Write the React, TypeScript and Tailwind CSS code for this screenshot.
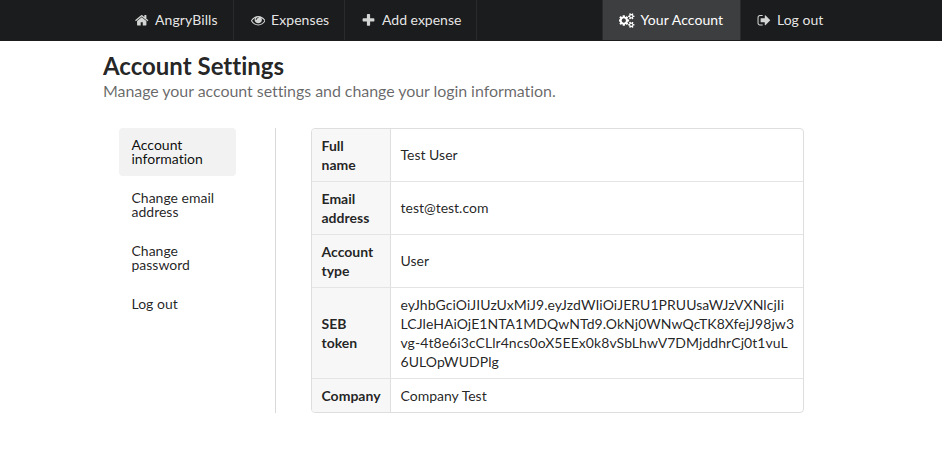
const HOME =
  "M1408 992v480q0 26-19 45t-45 19h-384v-384h-256v384h-384q-26 0-45-19t-19-45v-480q0-1 .5-3t.5-3l575-474 575 474q1 2 1 6zm223-69l-62 74q-8 9-21 11h-3q-13 0-21-7l-692-577-692 577q-12 8-24 7-13-2-21-11l-62-74q-8-10-7-23.5t11-21.5l719-599q32-26 76-26t76 26l244 204v-195q0-14 9-23t23-9h192q14 0 23 9t9 23v408l219 182q10 8 11 21.5t-7 23.5z";
const EYE =
  "M1664 960q-152-236-381-353 61 104 61 225 0 185-131.5 316.5t-316.5 131.5-316.5-131.5-131.5-316.5q0-121 61-225-229 117-381 353 133 205 333.5 326.5t434.5 121.5 434.5-121.5 333.5-326.5zm-720-384q0-20-14-34t-34-14q-125 0-214.5 89.5t-89.5 214.5q0 20 14 34t34 14 34-14 14-34q0-86 61-147t147-61q20 0 34-14t14-34zm848 384q0 34-20 69-140 230-376.5 368.5t-499.5 138.5-499.5-139-376.5-368q-20-35-20-69t20-69q140-229 376.5-368t499.5-139 499.5 139 376.5 368q20 35 20 69z";
const PLUS =
  "M1600 736v192q0 40-28 68t-68 28h-416v416q0 40-28 68t-68 28h-192q-40 0-68-28t-28-68v-416h-416q-40 0-68-28t-28-68v-192q0-40 28-68t68-28h416v-416q0-40 28-68t68-28h192q40 0 68 28t28 68v416h416q40 0 68 28t28 68z";
const COGS =
  "M832 896q0-106-75-181t-181-75-181 75-75 181 75 181 181 75 181-75 75-181zm768 512q0-52-38-90t-90-38-90 38-38 90q0 53 37.5 90.5t90.5 37.5 90.5-37.5 37.5-90.5zm0-1024q0-52-38-90t-90-38-90 38-38 90q0 53 37.5 90.5t90.5 37.5 90.5-37.5 37.5-90.5zm-384 421v185q0 10-7 19.5t-16 10.5l-155 24q-11 35-32 76 34 48 90 115 7 11 7 20 0 12-7 19-23 30-82.5 89.5t-78.5 59.5q-11 0-21-7l-115-90q-37 19-77 31-11 108-23 155-7 24-30 24h-186q-11 0-20-7.5t-10-17.5l-23-153q-34-10-75-31l-118 89q-7 7-20 7-11 0-21-8-144-133-144-160 0-9 7-19 10-14 41-53t47-61q-23-44-35-82l-152-24q-10-1-17-9.5t-7-19.5v-185q0-10 7-19.5t16-10.5l155-24q11-35 32-76-34-48-90-115-7-11-7-20 0-12 7-20 22-30 82-89t79-59q11 0 21 7l115 90q34-18 77-32 11-108 23-154 7-24 30-24h186q11 0 20 7.5t10 17.5l23 153q34 10 75 31l118-89q8-7 20-7 11 0 21 8 144 133 144 160 0 8-7 19-12 16-42 54t-45 60q23 48 34 82l152 23q10 2 17 10.5t7 19.5zm640 533v140q0 16-149 31-12 27-30 52 51 113 51 138 0 4-4 7-122 71-124 71-8 0-46-47t-52-68q-20 2-30 2t-30-2q-14 21-52 68t-46 47q-2 0-124-71-4-3-4-7 0-25 51-138-18-25-30-52-149-15-149-31v-140q0-16 149-31 13-29 30-52-51-113-51-138 0-4 4-7 4-2 35-20t59-34 30-16q8 0 46 46.5t52 67.5q20-2 30-2t30 2q51-71 92-112l6-2q4 0 124 70 4 3 4 7 0 25-51 138 17 23 30 52 149 15 149 31zm0-1024v140q0 16-149 31-12 27-30 52 51 113 51 138 0 4-4 7-122 71-124 71-8 0-46-47t-52-68q-20 2-30 2t-30-2q-14 21-52 68t-46 47q-2 0-124-71-4-3-4-7 0-25 51-138-18-25-30-52-149-15-149-31v-140q0-16 149-31 13-29 30-52-51-113-51-138 0-4 4-7 4-2 35-20t59-34 30-16q8 0 46 46.5t52 67.5q20-2 30-2t30 2q51-71 92-112l6-2q4 0 124 70 4 3 4 7 0 25-51 138 17 23 30 52 149 15 149 31z";
const SIGN_OUT =
  "M704 1440q0 4 1 20t.5 26.5-3 23.5-10 19.5-20.5 6.5h-320q-119 0-203.5-84.5t-84.5-203.5v-704q0-119 84.5-203.5t203.5-84.5h320q13 0 22.5 9.5t9.5 22.5q0 4 1 20t.5 26.5-3 23.5-10 19.5-20.5 6.5h-320q-66 0-113 47t-47 113v704q0 66 47 113t113 47h312l11.5 1 11.5 3 8 5.5 7 9 2 13.5zM1632 896q0 26-19 45l-544 544q-19 19-45 19t-45-19-19-45v-288H512q-26 0-45-19t-19-45V704q0-26 19-45t45-19h448V352q0-26 19-45t45-19 45 19l544 544q19 19 19 45z";

function Icon({ d, width = 1792, className }: { d: string; width?: number; className: string }) {
  return (
    <svg viewBox={`0 0 ${width} 1792`} className={`shrink-0 ${className}`} fill="currentColor">
      <path d={d} />
    </svg>
  );
}

const rows = [
  { label: ["Full", "name"], value: ["Test User"], h: "h-[53px]" },
  { label: ["Email", "address"], value: ["test@test.com"], h: "h-[53px]" },
  { label: ["Account", "type"], value: ["User"], h: "h-[53px]" },
  {
    label: ["SEB", "token"],
    value: [
      "eyJhbGciOiJIUzUxMiJ9.eyJzdWIiOiJERU1PRUUsaWJzVXNlcjIi",
      "LCJleHAiOjE1NTA1MDQwNTd9.OkNj0WNwQcTK8XfejJ98jw3",
      "vg-4t8e6i3cCLlr4ncs0oX5EEx0k8vSbLhwV7DMjddhrCj0t1vuL",
      "6ULOpWUDPlg",
    ],
    h: "h-[91px]",
  },
  { label: ["Company"], value: ["Company Test"], h: "h-[34px]" },
];

function Lines({ lines }: { lines: string[] }) {
  return (
    <div className={lines.length === 1 ? "pb-px" : ""}>
      {lines.map((line) => (
        <div key={line} className={`whitespace-nowrap ${lines.length > 2 ? "tracking-[0.06px]" : ""}`}>{line}</div>
      ))}
    </div>
  );
}

const side = "h-12 w-[117px] rounded-[4px] py-[10px] pr-[13px] pl-[12.5px]";

export default function App() {
  return (
    <div className="h-[468px] w-[942px] overflow-hidden bg-white font-['Lato',sans-serif] text-[14px] text-[rgba(0,0,0,0.87)] [font-variant-ligatures:none]">
      <nav className="flex h-[41px] border-b border-[#1b1c1d] bg-[#1b1c1d] pl-[120px] leading-[14px] text-[rgba(255,255,255,0.9)]">
        <a className="flex w-[114px] items-center border-r border-[#2a2b2c] pl-[15px]"><Icon d={HOME} className="mr-[5.5px] size-[14.5px] opacity-90" /><span className="tracking-[0.1px]">AngryBills</span></a>
        <a className="flex w-[111px] items-center border-r border-[#2a2b2c] pl-[16.5px]"><Icon d={EYE} className="mr-[6px] size-[14.5px] opacity-90" /><span className="tracking-[0.08px]">Expenses</span></a>
        <a className="flex w-[132px] items-center border-r border-[#2a2b2c] pl-4"><Icon d={PLUS} className="mr-[6px] size-[15px] opacity-90" />Add expense</a>
        <a className="ml-[125px] flex w-[139px] items-center border-x border-[#2a2b2c] bg-[#3d3e3f] pl-4 text-white"><Icon d={COGS} width={1920} className="mr-[5.5px] h-[15px] w-4" /><span className="tracking-[0.08px]">Your Account</span></a>
        <a className="flex items-center pl-[15.5px]"><Icon d={SIGN_OUT} className="mr-[6px] size-[14.5px] opacity-90" />Log out</a>
      </nav>
      <header className="pt-[10px] pl-[103px]">
        <h1 className="text-[24px] leading-[30px] font-bold">Account Settings</h1>
        <p className="text-[16px] leading-[19px] tracking-[-0.06px] text-[rgba(0,0,0,0.6)]">Manage your account settings and change your login information.</p>
      </header>
      <main className="mt-[28px] ml-[119px] flex h-[285px]">
        <aside className="flex w-[157px] flex-col gap-[5px] border-r border-[#d9d9da] leading-[14px]">
          <a className={`${side} bg-[#f2f2f2] text-[rgba(0,0,0,0.95)]`}>Account information</a>
          <a className={side}>Change email address</a>
          <a className={side}>Change password</a>
          <a className={side}>Log out</a>
        </aside>
        <section className="ml-[35px] w-[493px] overflow-hidden rounded-[4px] border border-[#dededf]">
          {rows.map((r) => (
            <div key={r.label[0]} className={`flex border-b border-[#e4e4e5] leading-[19px] last:border-b-0 ${r.h}`}>
              <div className="flex w-[79px] shrink-0 items-center border-r border-[#dfdfe0] bg-[#f7f7f7] pl-[9.5px] font-bold"><Lines lines={r.label} /></div>
              <div className="flex items-center pl-[9.5px]"><Lines lines={r.value} /></div>
            </div>
          ))}
        </section>
      </main>
    </div>
  );
}
